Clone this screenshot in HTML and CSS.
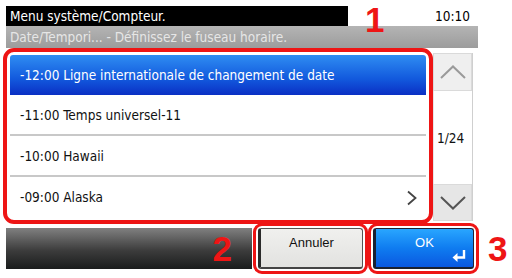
FILE: index.html
```html
<!DOCTYPE html>
<html lang="fr">
<head>
<meta charset="utf-8">
<title>Menu système</title>
<link rel="stylesheet" href="styles.css">
</head>
<body>
<div class="screen">
  <div class="top">
    <div class="title">Menu système/Compteur.</div>
    <div class="time">10:10</div>
    <div class="mark mark-1">1</div>
  </div>
  <div class="sub">Date/Tempori... - Définissez le fuseau horaire.</div>
  <div class="main">
    <div class="list-frame">
      <ul class="list">
        <li class="row selected">-12:00 Ligne internationale de changement de date</li>
        <li class="row">-11:00 Temps universel-11</li>
        <li class="row">-10:00 Hawaii</li>
        <li class="row last">-09:00 Alaska
          <svg class="more" width="12" height="16" viewBox="0 0 12 16"><path d="M2 1.5 L9.5 8 L2 14.5" fill="none" stroke="#444" stroke-width="1.8"/></svg>
        </li>
      </ul>
    </div>
    <div class="scroll">
      <div class="sbtn up">
        <svg width="26" height="14" viewBox="0 0 26 14"><path d="M1 13 L13 1.5 L25 13" fill="none" stroke="#9a9a9a" stroke-width="2"/></svg>
      </div>
      <div class="page">1/24</div>
      <div class="sbtn down">
        <svg width="26" height="14" viewBox="0 0 26 14"><path d="M1 1 L13 12.5 L25 1" fill="none" stroke="#555" stroke-width="2"/></svg>
      </div>
    </div>
  </div>
  <div class="bottom">
    <div class="bar"><span class="mark mark-2">2</span></div>
    <div class="btn-frame">
      <div class="btn cancel">Annuler</div>
    </div>
    <div class="btn-frame">
      <div class="btn ok">OK
        <svg class="enter" width="14" height="12" viewBox="0 0 14 12"><path d="M12 0 V7.5 H4" fill="none" stroke="#fff" stroke-width="2.4"/><path d="M0.5 7.5 L5.5 3 V12 Z" fill="#fff"/></svg>
      </div>
    </div>
    <span class="mark mark-3">3</span>
  </div>
</div>
</body>
</html>
```
FILE: styles.css
```css
* { box-sizing: border-box; }
html, body { margin: 0; padding: 0; background: #fff; }
body {
  width: 512px;
  height: 278px;
  overflow: hidden;
  font-family: Tahoma, "DejaVu Sans Condensed", "Liberation Sans", sans-serif;
  font-size: 13.5px;
}
.screen { position: relative; width: 512px; height: 278px; }

.top {
  position: relative;
  display: flex;
  align-items: center;
  height: 26px;
  padding-top: 6px;
}
.title {
  margin-left: 6px;
  width: 342px;
  height: 20px;
  line-height: 20px;
  background: #000;
  color: #fff;
  padding-left: 4px;
}
.time {
  margin-left: 87px;
  color: #000;
  line-height: 20px;
}
.mark {
  font-family: "Liberation Sans", Arial, sans-serif;
  font-weight: bold;
  color: #ee1515;
  font-size: 35px;
  line-height: 1;
}
.mark-1 { position: absolute; left: 365px; top: 2px; }

.sub {
  margin-left: 6px;
  width: 472px;
  height: 22px;
  line-height: 22px;
  padding-left: 4px;
  background: linear-gradient(#b4b4b4, #9c9c9c);
  color: #e6e6e6;
}

.main {
  display: flex;
  align-items: flex-start;
}
.list-frame {
  margin-left: 3px;
  width: 430px;
  border: 4px solid #ee1515;
  border-radius: 11px;
  padding: 3px;
}
.list {
  list-style: none;
  margin: 0;
  padding: 0;
}
.row {
  display: flex;
  align-items: center;
  justify-content: space-between;
  height: 41px;
  padding: 0 8px 0 10px;
  border-bottom: 2px solid #c8c8c8;
  color: #111;
  background: #fff;
}
.row.selected {
  height: 40px;
  border-bottom: none;
  color: #fff;
  background: linear-gradient(#2f8df2, #1259dd 60%, #0a2fc4);
  border-radius: 3px 3px 0 0;
}
.row.last { border-bottom: none; height: 40px; }
.more { margin-top: 2px; }

.scroll {
  margin-top: 5px;
  width: 40px;
  height: 168px;
  display: flex;
  flex-direction: column;
  border-right: 1px solid #cfcfcf;
}
.sbtn {
  height: 38px;
  display: flex;
  align-items: center;
  justify-content: center;
  background: #efefef;
  border: 1px solid #dadada;
}
.sbtn.down { height: 37px; background: #e6e6e6; }
.page {
  flex: 1;
  display: flex;
  align-items: center;
  padding-left: 3px;
  color: #111;
  background: #fff;
  border-left: 1px solid #e6e6e6;
}

.bottom {
  display: flex;
  align-items: center;
  margin-top: -1px;
}
.bar {
  margin-left: 6px;
  width: 246px;
  height: 41px;
  background: linear-gradient(#808080, #3c3c3c 55%, #1a1c1c);
  display: flex;
  align-items: center;
  justify-content: flex-end;
  padding-right: 20px;
}
.btn-frame {
  border: 3px solid #ee1515;
  border-radius: 9px;
  padding: 2px;
  height: 51px;
}
.btn-frame:nth-of-type(2) { width: 115px; margin-left: 1px; }
.btn-frame:nth-of-type(3) { width: 111px; }
.btn {
  position: relative;
  height: 100%;
  border-radius: 3px;
  text-align: center;
  padding-top: 6px;
  font-family: "Liberation Sans", Arial, sans-serif;
  font-size: 13px;
}
.cancel {
  background: linear-gradient(#f0f0ee, #e2e2e0);
  color: #111;
  border: 1px solid #555;
  border-left: 3px solid #2a2a2a;
  border-bottom: 2px solid #444;
}
.ok {
  background: linear-gradient(#29a6ff, #0f7cf0 50%, #0a58e0);
  color: #fff;
  border: 1px solid #223;
  border-left: 3px solid #1a2030;
  border-bottom: 2px solid #1a2030;
}
.enter { position: absolute; right: 7px; bottom: 5px; }
.mark-3 { margin-left: 9px; }
```
